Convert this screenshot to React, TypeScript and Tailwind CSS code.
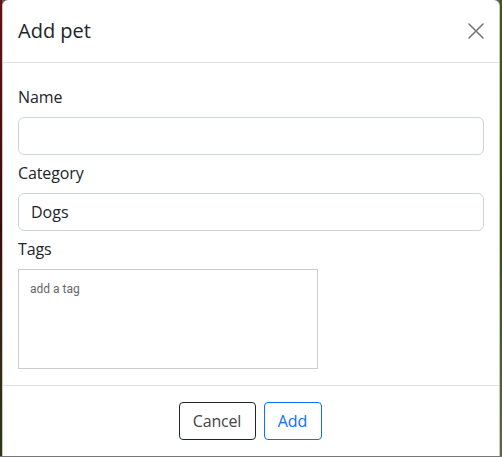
export default function App() {
  return (
    <div className="flex h-[457px] w-[502px] flex-col overflow-hidden bg-[#5b5b5b] [font-family:'Open_Sans','Noto_Sans',sans-serif] text-[#212529]">
      <div className="flex h-[456px]">
        {/* backdrop edges */}
        <div className="w-[2px] bg-gradient-to-b from-[#6a0f0f] via-[#3a0c08] to-[#2a3a14]" />

        {/* Modal */}
        <div className="flex w-[498px] flex-col rounded-t-[6px] border-x border-[#c8c8c8] bg-white">
          <div className="flex h-[63px] items-center justify-between border-b border-[#dee2e6] pl-[15px] pr-[15px]">
            <h5 className="text-[20px] leading-[30px]">Add pet</h5>
            <button className="flex h-[16px] w-[16px] items-center justify-center">
              <svg width="16" height="16" viewBox="0 0 16 16">
                <path d="M1 1 L15 15 M15 1 L1 15" stroke="#777" strokeWidth="1.6" strokeLinecap="round" />
              </svg>
            </button>
          </div>

          <div className="flex flex-col px-[15px] pt-[22px] pb-[16px]">
            <label className="mb-[8px] text-[16px] leading-[24px] tracking-[-0.1px]">Name</label>
            <input className="h-[38px] w-full rounded-[6px] border border-[#ced4da] px-[12px] text-[16px] outline-none" />

            <label className="mt-[6px] mb-[8px] text-[16px] leading-[24px] tracking-[-0.1px]">Category</label>
            <input
              className="h-[38px] w-full rounded-[6px] border border-[#ced4da] px-[12px] text-[16px] outline-none"
              defaultValue="Dogs"
            />

            <label className="mt-[6px] mb-[8px] text-[16px] leading-[24px] tracking-[-0.1px]">Tags</label>
            <div className="h-[100px] w-[300px] border border-[#cccccc] px-[11px] pt-[12px]">
              <span className="block text-[12px] leading-[14px] text-[#666] [font-family:Roboto,sans-serif]">add a tag</span>
            </div>
          </div>

          <div className="flex justify-center gap-[8px] border-t border-[#dee2e6] pl-[10px] pr-[12px] pt-[16px] pb-[16px]">
            <button className="h-[38px] w-[77px] rounded-[4px] border border-[#212529] text-[16px] tracking-[-0.2px] text-[#444]">
              Cancel
            </button>
            <button className="h-[38px] w-[58px] rounded-[4px] border border-[#0d6efd] text-[16px] text-[#0d6efd]">
              Add
            </button>
          </div>
        </div>

        <div className="w-[2px] bg-gradient-to-b from-[#3c5a14] via-[#2e5010] to-[#5a6a40]" />
      </div>
      <div className="h-[1px] bg-[#777]" />
    </div>
  );
}
